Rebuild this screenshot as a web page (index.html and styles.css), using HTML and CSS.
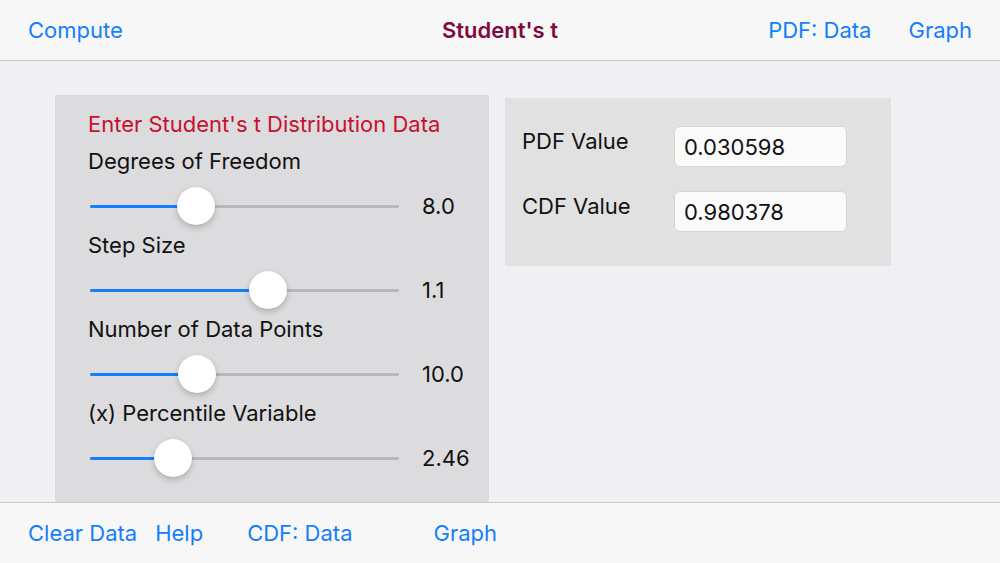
FILE: index.html
```html
<!DOCTYPE html>
<html lang="en">
<head>
    <meta charset="UTF-8">
    <meta name="viewport" content="width=device-width, initial-scale=1.0">
    <title>Student's t</title>
    <link rel="stylesheet" href="styles.css">
</head>
<body>
    <div class="app">
        <header class="nav-bar">
            <a class="nav-link">Compute</a>
            <h1 class="nav-title">Student's t</h1>
            <div class="nav-right">
                <a class="nav-link">PDF: Data</a>
                <a class="nav-link">Graph</a>
            </div>
        </header>

        <main class="content">
            <section class="input-panel">
                <h2 class="panel-title">Enter Student's t Distribution Data</h2>

                <div class="slider-group">
                    <div class="slider-label">Degrees of Freedom</div>
                    <div class="slider-row">
                        <div class="slider">
                            <div class="slider-fill" style="width: 106px"></div>
                            <div class="slider-thumb" style="left: 106px"></div>
                        </div>
                        <span class="slider-value">8.0</span>
                    </div>
                </div>

                <div class="slider-group">
                    <div class="slider-label">Step Size</div>
                    <div class="slider-row">
                        <div class="slider">
                            <div class="slider-fill" style="width: 178px"></div>
                            <div class="slider-thumb" style="left: 178px"></div>
                        </div>
                        <span class="slider-value">1.1</span>
                    </div>
                </div>

                <div class="slider-group">
                    <div class="slider-label">Number of Data Points</div>
                    <div class="slider-row">
                        <div class="slider">
                            <div class="slider-fill" style="width: 107px"></div>
                            <div class="slider-thumb" style="left: 107px"></div>
                        </div>
                        <span class="slider-value">10.0</span>
                    </div>
                </div>

                <div class="slider-group">
                    <div class="slider-label">(x) Percentile Variable</div>
                    <div class="slider-row">
                        <div class="slider">
                            <div class="slider-fill" style="width: 83px"></div>
                            <div class="slider-thumb" style="left: 83px"></div>
                        </div>
                        <span class="slider-value">2.46</span>
                    </div>
                </div>
            </section>

            <section class="result-panel">
                <div class="result-row">
                    <label for="pdf-value">PDF Value</label>
                    <input type="text" id="pdf-value" value="0.030598" readonly>
                </div>
                <div class="result-row">
                    <label for="cdf-value">CDF Value</label>
                    <input type="text" id="cdf-value" value="0.980378" readonly>
                </div>
            </section>
        </main>

        <footer class="tool-bar">
            <a class="nav-link">Clear Data</a>
            <a class="nav-link help">Help</a>
            <a class="nav-link cdf">CDF: Data</a>
            <a class="nav-link graph">Graph</a>
        </footer>
    </div>
</body>
</html>
```

FILE: styles.css
```css
* {
    margin: 0;
    padding: 0;
    box-sizing: border-box;
    font-family: Inter, "Liberation Sans", sans-serif;
}

body {
    background: #efeff4;
}

.app {
    display: flex;
    flex-direction: column;
    height: 563px;
}

/* top navigation */
.nav-bar {
    display: flex;
    align-items: center;
    justify-content: space-between;
    height: 61px;
    padding: 0 28px;
    background: #f7f7f8;
    border-bottom: 1px solid #c9c9cc;
    position: relative;
}

.nav-link {
    color: #157efb;
    font-size: 22px;
    cursor: pointer;
}

.nav-title {
    position: absolute;
    left: 0;
    right: 0;
    text-align: center;
    font-size: 22px;
    font-weight: 600;
    color: #7f0a3c;
    pointer-events: none;
}

.nav-right {
    display: flex;
    gap: 37px;
}

/* main area */
.content {
    flex: 1;
    display: flex;
    align-items: flex-start;
    gap: 16px;
    padding: 34px 0 0 55px;
}

.input-panel {
    width: 434px;
    align-self: stretch;
    background: #dcdcde;
    padding: 14px 0 0 33px;
}

.panel-title {
    font-size: 22px;
    font-weight: 400;
    line-height: 30px;
    color: #c8102e;
    margin-bottom: 7px;
}

.slider-group {
    margin-bottom: 2px;
}

.slider-label {
    font-size: 22px;
    line-height: 30px;
    color: #111;
}

.slider-row {
    display: flex;
    align-items: center;
    height: 44px;
    margin-top: 8px;
    padding-left: 2px;
}

.slider {
    position: relative;
    width: 309px;
    height: 3px;
    background: #b8b8ba;
    border-radius: 2px;
}

.slider-fill {
    height: 100%;
    background: #157efb;
    border-radius: 2px;
}

.slider-thumb {
    position: absolute;
    top: 50%;
    width: 38px;
    height: 38px;
    margin: -19px 0 0 -19px;
    border-radius: 50%;
    background: #fff;
    box-shadow: 0 3px 6px rgba(0, 0, 0, 0.2), 0 0 1px rgba(0, 0, 0, 0.15);
}

.slider-value {
    margin-left: 23px;
    font-size: 22px;
    color: #111;
}

.result-panel {
    width: 386px;
    margin-top: 3px;
    background: #e1e1e1;
    padding: 28px 0 34px 17px;
    display: flex;
    flex-direction: column;
    gap: 24px;
}

.result-row {
    display: flex;
    align-items: flex-start;
}

.result-row label {
    width: 152px;
    font-size: 22px;
    line-height: 30px;
    color: #111;
}

.result-row input {
    width: 173px;
    height: 41px;
    padding: 0 9px;
    border: 1px solid #d6d6d6;
    border-radius: 6px;
    background: #fafafa;
    font-size: 22px;
    color: #111;
}

.result-row input:focus {
    outline: none;
}

/* bottom toolbar */
.tool-bar {
    display: flex;
    align-items: center;
    height: 61px;
    padding: 0 28px;
    background: #f7f7f8;
    border-top: 1px solid #c9c9cc;
}

.tool-bar .help {
    margin-left: 18px;
}

.tool-bar .cdf {
    margin-left: 44px;
}

.tool-bar .graph {
    margin-left: 81px;
}
```
